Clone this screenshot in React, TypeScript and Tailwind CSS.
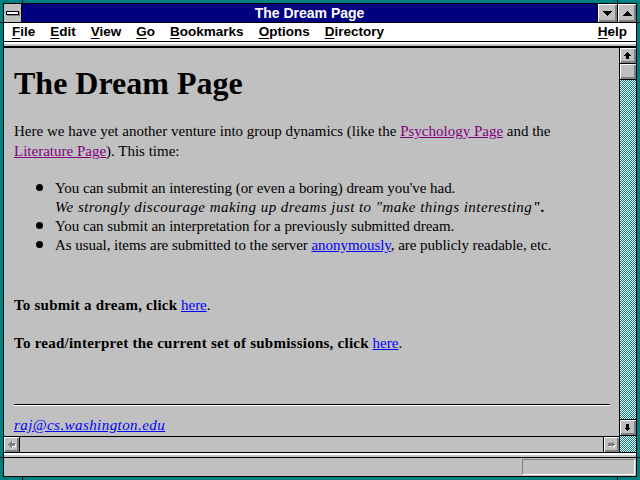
import React from 'react';

const dither =
  'bg-[image:repeating-conic-gradient(#008080_0%_25%,#ffffff_0%_50%)] bg-[length:2px_2px]';
const raised =
  'bg-[#c0c0c0] shadow-[inset_1px_1px_0_#ffffff,inset_-1px_-1px_0_#808080,inset_-2px_-2px_0_#808080]';

type Dir = 'up' | 'down' | 'left' | 'right';

const Arrow = ({ dir, disabled }: { dir: Dir; disabled?: boolean }) => {
  const rot = { up: 0, right: 90, down: 180, left: 270 }[dir];
  const pts = '4.5,1 8,4.5 6,4.5 6,8 3,8 3,4.5 1,4.5';
  return (
    <svg width="10" height="10" viewBox="0 0 10 10" shapeRendering="crispEdges">
      {disabled && <polygon points={pts} fill="#ffffff" transform={`translate(1 1) rotate(${rot} 4.5 4.5)`} />}
      <polygon points={pts} fill={disabled ? '#808080' : '#000000'} transform={`rotate(${rot} 4.5 4.5)`} />
    </svg>
  );
};

const Tri = ({ up }: { up?: boolean }) => (
  <svg width="9" height="5" viewBox="0 0 9 5" shapeRendering="crispEdges">
    <polygon points={up ? '4.5,0 9,5 0,5' : '0,0 9,0 4.5,5'} fill="#000000" />
  </svg>
);

const MenuItem = ({ label }: { label: string }) => (
  <span>
    <span className="underline underline-offset-[2px]">{label[0]}</span>
    {label.slice(1)}
  </span>
);

const Bullet = () => <span className="w-[7px] h-[7px] rounded-full bg-black mt-[5px] mr-[12px] shrink-0" />;

export default function App() {
  return (
    <div className="relative w-[640px] h-[480px] bg-[#008080] p-[3px] overflow-hidden">
      {/* frame notches */}
      <div className="absolute left-[22px] top-0 w-px h-[4px] bg-black" />
      <div className="absolute left-[617px] top-0 w-px h-[4px] bg-black" />
      <div className="absolute left-[22px] bottom-0 w-px h-[4px] bg-black" />
      <div className="absolute left-[617px] bottom-0 w-px h-[4px] bg-black" />
      <div className="absolute left-0 top-[22px] w-[4px] h-px bg-black" />
      <div className="absolute right-0 top-[22px] w-[4px] h-px bg-black" />
      <div className="absolute left-0 top-[457px] w-[4px] h-px bg-black" />
      <div className="absolute right-0 top-[457px] w-[4px] h-px bg-black" />

      <div className="h-full border border-black flex flex-col bg-[#c0c0c0] font-['Liberation_Sans',Arial,sans-serif]">
        {/* title bar */}
        <div className="h-[19px] flex border-b border-black shrink-0">
          <div className="w-[18px] border-r border-black bg-[#c0c0c0] flex items-center justify-center">
            <div className="w-[13px] h-[4px] bg-white border border-black shadow-[1px_1px_0_#808080]" />
          </div>
          <div className="flex-1 bg-[#000080] text-white font-bold text-[14px] flex items-center justify-center">
            The Dream Page
          </div>
          <div className={`w-[20px] border-l border-black flex items-center justify-center ${raised}`}>
            <Tri />
          </div>
          <div className={`w-[19px] border-l border-black flex items-center justify-center ${raised}`}>
            <Tri up />
          </div>
        </div>

        {/* menu bar */}
        <div className="h-[19px] bg-white border-b border-black flex items-center gap-[15px] pl-[8px] pr-[9px] text-[13.5px] font-bold text-black shrink-0">
          <MenuItem label="File" />
          <MenuItem label="Edit" />
          <MenuItem label="View" />
          <MenuItem label="Go" />
          <MenuItem label="Bookmarks" />
          <MenuItem label="Options" />
          <MenuItem label="Directory" />
          <span className="ml-auto">
            <MenuItem label="Help" />
          </span>
        </div>
        <div className="h-[6px] border-t-2 border-white border-b-2 border-b-black bg-[#c0c0c0] shrink-0" />

        {/* main */}
        <div className="flex-1 flex min-h-0 border-b border-black">
          <div className="flex-1 flex flex-col min-w-0">
            <div className="flex-1 overflow-hidden pl-[10px] pt-[17px] font-['Liberation_Serif','Times_New_Roman',serif] text-[15px] text-black">
              <h1 className="text-[32px] leading-[36px] font-bold">The Dream Page</h1>
              <p className="mt-[20px] leading-[20px] whitespace-nowrap">
                Here we have yet another venture into group dynamics (like the{' '}
                <a className="text-[#800080] underline">Psychology Page</a> and the
                <br />
                <a className="text-[#800080] underline">Literature Page</a>). This time:
              </p>
              <ul className="mt-[18px] leading-[19px] pl-[22px] whitespace-nowrap tracking-[-0.05px]">
                <li className="flex">
                  <Bullet />
                  <span>
                    You can submit an interesting (or even a boring) dream you've had.
                    <br />
                    <i className="tracking-[0.45px]">
                      We strongly discourage making up dreams just to "make things interesting
                      <b>".</b>
                    </i>
                  </span>
                </li>
                <li className="flex">
                  <Bullet />
                  <span>You can submit an interpretation for a previously submitted dream.</span>
                </li>
                <li className="flex">
                  <Bullet />
                  <span>
                    As usual, items are submitted to the server{' '}
                    <a className="text-[#0000ff] underline">anonymously</a>, are publicly readable, etc.
                  </span>
                </li>
              </ul>
              <p className="mt-[40px] leading-[20px]">
                <b className="tracking-[0.22px]">To submit a dream, click</b>{' '}
                <a className="text-[#0000ff] underline">here</a>.
              </p>
              <p className="mt-[18px] leading-[20px]">
                <b className="tracking-[0.25px]">To read/interpret the current set of submissions, click</b>{' '}
                <a className="text-[#0000ff] underline">here</a>.
              </p>
              <hr className="mt-[51px] mr-[9px] border-0 border-t border-t-black border-b border-b-white" />
              <p className="mt-[9px] leading-[20px]">
                <a className="text-[#0000ff] underline italic tracking-[0.43px]">raj@cs.washington.edu</a>
              </p>
            </div>

            {/* horizontal scrollbar */}
            <div className="h-[16px] border-t border-black flex shrink-0">
              <div className={`w-[16px] border-r border-black flex items-center justify-center ${raised}`}>
                <Arrow dir="left" disabled />
              </div>
              <div className="flex-1 bg-[#c0c0c0]" />
              <div className={`w-[16px] border-l border-black flex items-center justify-center ${raised}`}>
                <Arrow dir="right" disabled />
              </div>
            </div>
          </div>

          {/* vertical scrollbar */}
          <div className="w-[17px] border-l border-black flex flex-col shrink-0">
            <div className={`h-[16px] border-b border-black flex items-center justify-center ${raised}`}>
              <Arrow dir="up" />
            </div>
            <div className={`h-[16px] border-b border-black ${raised}`} />
            <div className={`flex-1 ${dither}`} />
            <div className={`h-[17px] border-t border-b border-black flex items-center justify-center ${raised}`}>
              <Arrow dir="down" />
            </div>
            <div className={`h-[16px] ${dither}`} />
          </div>
        </div>

        {/* status bar */}
        <div className="h-[5px] border-t-2 border-white border-b border-b-black bg-[#c0c0c0] shrink-0" />
        <div className="h-[18px] shrink-0 flex items-start justify-end pr-[1px] pt-px">
          <div className="w-[113px] h-[16px] border border-t-[#808080] border-l-[#808080] border-b-white border-r-white" />
        </div>
      </div>
    </div>
  );
}
